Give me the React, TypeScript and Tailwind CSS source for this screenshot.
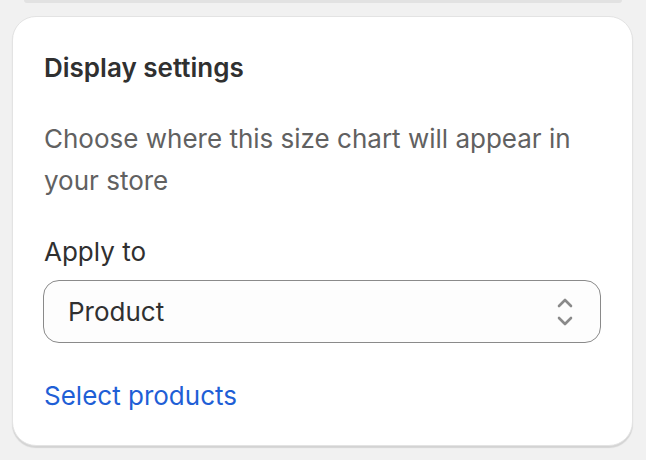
export default function App() {
  return (
    <div className="w-[646px] h-[460px] bg-[#f1f1f1] overflow-hidden" style={{ fontFamily: "Inter, 'Noto Sans', sans-serif" }}>
      <div className="mx-[24px] h-[3px] bg-[#e2e2e2] rounded-b-[14px]" />
      <div className="mt-[13px] ml-[12px] w-[621px] h-[430px] bg-white rounded-[24px] border border-[#e3e3e3] shadow-[0_2px_1px_0_rgba(0,0,0,0.12)] px-[31px] pt-[31px]">
        <div className="text-[26px] leading-[40px] font-semibold text-[#303030]">Display settings</div>
        <div className="mt-[30px] text-[26px] leading-[42px] text-[#616161]">
          Choose where this size chart will appear in your store
        </div>
        <div className="mt-[30px] text-[26px] leading-[40px] text-[#303030]">Apply to</div>
        <div className="mt-[8px] h-[63px] w-[558px] -ml-px rounded-[16px] border border-[#8a8a8a] bg-[#fdfdfd] flex items-center justify-between pl-[24px] pr-[25px]">
          <span className="text-[26px] text-[#303030]">Product</span>
          <svg width="20" height="32" viewBox="0 0 20 32" fill="none" stroke="#8a8a8a" strokeWidth="2.6" strokeLinecap="round" strokeLinejoin="round">
            <path d="M4 10 L10 4 L16 10" />
            <path d="M4 22 L10 28 L16 22" />
          </svg>
        </div>
        <div className="mt-[33px] text-[26px] leading-[40px] text-[#1f5fd6]">Select products</div>
      </div>
    </div>
  );
}
